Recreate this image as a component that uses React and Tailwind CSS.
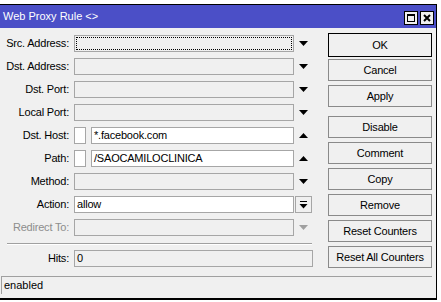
import React from 'react';

const font = { fontFamily: '"Liberation Sans", Arial, sans-serif' };

function Arrow({ up = false, muted = false }) {
  return (
    <div className="w-[18px] h-[17px] flex items-center justify-center">
      <svg width="9" height="5" viewBox="0 0 9 5">
        {up ? (
          <path d="M0 5 L4.5 0 L9 5 Z" fill={muted ? '#a0a0a0' : '#000'} />
        ) : (
          <path d="M0 0 L9 0 L4.5 5 Z" fill={muted ? '#a0a0a0' : '#000'} />
        )}
      </svg>
    </div>
  );
}

function Row({ label, muted, children }) {
  return (
    <div className="flex items-center h-[17px]">
      <div className={`w-[71px] pr-[2px] text-right text-[11px] tracking-[-0.2px] leading-none ${muted ? 'text-[#8d8d8d]' : 'text-black'}`}>
        {label}
      </div>
      <div className="ml-[3px] flex items-center">{children}</div>
    </div>
  );
}

function Box({ white, value, focus, w = 'w-[220px]' }) {
  return (
    <div className={`relative ${w} h-[17px] border border-[#a6a6a6] ${white ? 'bg-white' : 'bg-[#f0f0f0]'} flex items-center px-[2px] text-[11px] tracking-[-0.2px] text-black`}>
      {focus && <div className="absolute inset-[1px] border border-dotted border-black" />}
      {value}
    </div>
  );
}

function Check() {
  return <div className="w-[12px] h-[17px] flex items-center"><div className="w-[12px] h-[17px] border border-[#a6a6a6] bg-white" /></div>;
}

function Btn({ children, primary, className = '' }) {
  return (
    <div className={`w-[104px] h-[22px] flex items-center justify-center text-[11px] tracking-[-0.2px] bg-[#f0f0f0] border ${primary ? 'border-black' : 'border-[#8a8a8a]'} ${className}`}>
      {children}
    </div>
  );
}

export default function App() {
  return (
    <div className="w-[441px] h-[302px] bg-white pt-[4px]" style={font}>
      <div className="w-[437px] h-[296px] border-t border-r border-b-2 border-black flex flex-col bg-[#f0f0f0]">
        <div className="h-[23px] bg-[#4b4fc7] flex items-center justify-between pl-[3px] pr-[2px]">
          <span className="text-white text-[11px]">Web Proxy Rule &lt;&gt;</span>
          <div className="flex gap-[2px] mt-[2px]">
            <div className="w-[14px] h-[14px] border border-black bg-[#f0f0f0] flex items-center justify-center">
              <div className="w-[8px] h-[8px] border border-black border-t-2" />
            </div>
            <div className="w-[14px] h-[14px] border border-black bg-[#f0f0f0] flex items-center justify-center">
              <svg width="8" height="8" viewBox="0 0 8 8">
                <path d="M1 1 L7 7 M7 1 L1 7" stroke="#000" strokeWidth="2" />
              </svg>
            </div>
          </div>
        </div>

        <div className="flex flex-1">
          <div className="w-[313px] pt-[7px] flex flex-col">
            <div className="flex flex-col gap-[6px]">
              <Row label="Src. Address:"><Box focus /><Arrow /></Row>
              <Row label="Dst. Address:"><Box /><Arrow /></Row>
              <Row label="Dst. Port:"><Box /><Arrow /></Row>
              <Row label="Local Port:"><Box /><Arrow /></Row>
              <Row label="Dst. Host:">
                <Check />
                <div className="ml-[5px]"><Box white w="w-[203px]" value="*.facebook.com" /></div>
                <Arrow up />
              </Row>
              <Row label="Path:">
                <Check />
                <div className="ml-[5px]"><Box white w="w-[203px]" value="/SAOCAMILOCLINICA" /></div>
                <Arrow up />
              </Row>
              <Row label="Method:"><Box /><Arrow /></Row>
              <Row label="Action:">
                <Box white value="allow" />
                <div className="ml-[1px] w-[17px] h-[17px] border border-[#a6a6a6] bg-[#f0f0f0] flex items-center justify-center">
                  <svg width="9" height="8" viewBox="0 0 9 8">
                    <path d="M1 0.5 L8 0.5" stroke="#000" strokeWidth="1" />
                    <path d="M0.5 3 L8.5 3 L4.5 7.5 Z" fill="#000" />
                  </svg>
                </div>
              </Row>
              <Row label="Redirect To:" muted><Box /><Arrow muted /></Row>
            </div>
            <div className="ml-[7px] mt-[7px] w-[305px] border-t border-b border-t-[#a0a0a0] border-b-white" />
            <div className="mt-[5px]">
              <Row label="Hits:"><Box w="w-[239px]" value="0" /></Row>
            </div>
          </div>

          <div className="ml-[15px] pt-[5px] flex flex-col">
            <Btn primary className="h-[24px]">OK</Btn>
            <Btn className="mt-[2px]">Cancel</Btn>
            <Btn className="mt-[4px]">Apply</Btn>
            <Btn className="mt-[9px]">Disable</Btn>
            <Btn className="mt-[4px]">Comment</Btn>
            <Btn className="mt-[4px]">Copy</Btn>
            <Btn className="mt-[4px]">Remove</Btn>
            <Btn className="mt-[4px]">Reset Counters</Btn>
            <Btn className="mt-[4px]">Reset All Counters</Btn>
          </div>
        </div>

        <div className="ml-[1px] mb-[4px] w-[431px] h-[18px] border-t border-l border-[#a0a0a0] flex items-center pl-[2px] text-[11px] text-black">
          enabled
        </div>
      </div>
    </div>
  );
}
